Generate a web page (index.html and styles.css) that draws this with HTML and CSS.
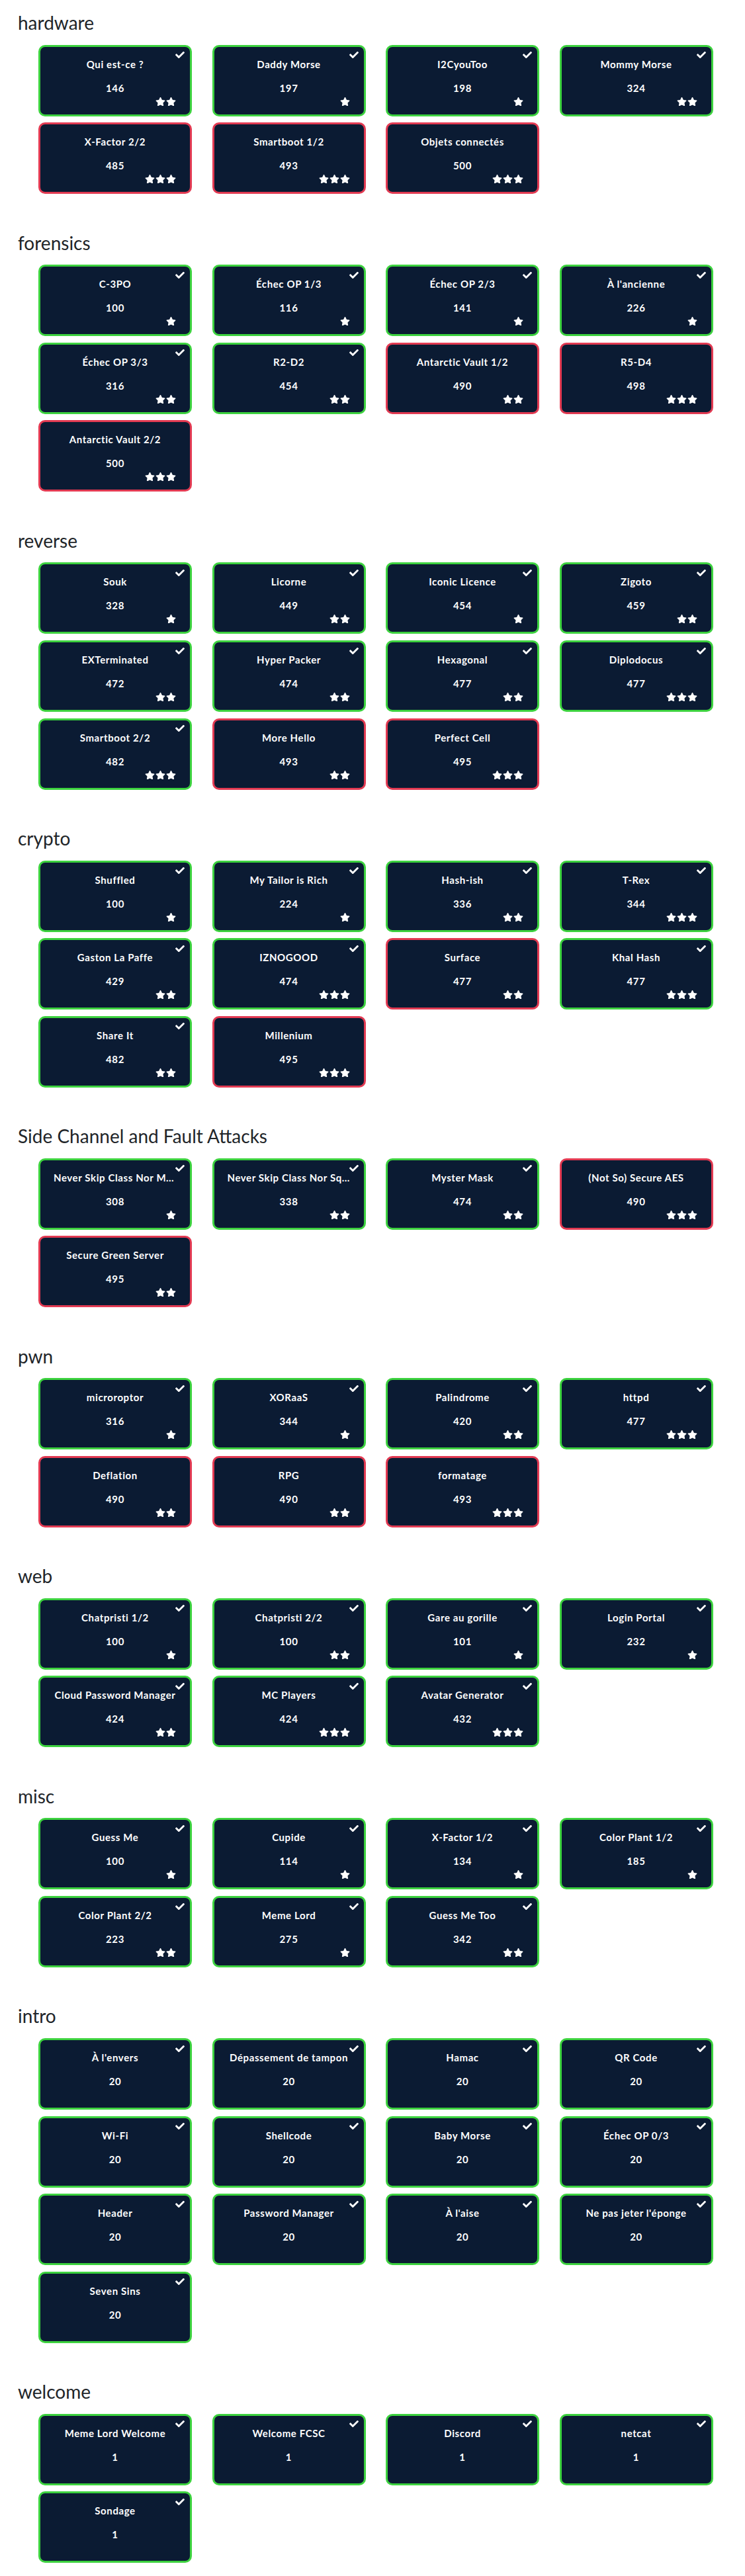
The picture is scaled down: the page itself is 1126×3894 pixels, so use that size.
FILE: index.html
```html
<!DOCTYPE html>
<html lang="fr">
<head>
<meta charset="utf-8">
<title>Challenges</title>
<link rel="stylesheet" href="styles.css">
</head>
<body>
<svg class="sprite" aria-hidden="true">
  <symbol id="star" viewBox="0 0 576 512"><path d="M259.3 17.8L194 150.2 47.9 171.5c-26.2 3.8-36.7 36.1-17.7 54.6l105.7 103-25 145.5c-4.5 26.3 23.2 46 46.4 33.7L288 439.6l130.7 68.7c23.2 12.2 50.9-7.4 46.4-33.7l-25-145.5 105.7-103c19-18.5 8.5-50.8-17.7-54.6L382 150.2 316.7 17.8c-11.7-23.6-45.6-23.9-57.4 0z"/></symbol>
  <symbol id="check" viewBox="0 72 512 376"><path d="M173.898 439.404l-166.4-166.4c-9.997-9.997-9.997-26.206 0-36.204l36.203-36.204c9.997-9.998 26.207-9.998 36.204 0L192 312.69 432.095 72.596c9.997-9.997 26.207-9.997 36.204 0l36.203 36.204c9.997 9.997 9.997 26.206 0 36.204l-294.4 294.401c-9.998 9.997-26.207 9.997-36.204-.001z"/></symbol>
</svg>
<main class="page">

<section class="cat">
<h3 class="cat-title">hardware</h3>
<div class="grid">
<div class="card solved"><svg class="check"><use href="#check"/></svg><div class="name">Qui est-ce ?</div><div class="pts">146</div><div class="stars"><svg class="star"><use href="#star"/></svg><svg class="star"><use href="#star"/></svg></div></div>
<div class="card solved"><svg class="check"><use href="#check"/></svg><div class="name">Daddy Morse</div><div class="pts">197</div><div class="stars"><svg class="star"><use href="#star"/></svg></div></div>
<div class="card solved"><svg class="check"><use href="#check"/></svg><div class="name">I2CyouToo</div><div class="pts">198</div><div class="stars"><svg class="star"><use href="#star"/></svg></div></div>
<div class="card solved"><svg class="check"><use href="#check"/></svg><div class="name">Mommy Morse</div><div class="pts">324</div><div class="stars"><svg class="star"><use href="#star"/></svg><svg class="star"><use href="#star"/></svg></div></div>
<div class="card unsolved"><div class="name">X-Factor 2/2</div><div class="pts">485</div><div class="stars"><svg class="star"><use href="#star"/></svg><svg class="star"><use href="#star"/></svg><svg class="star"><use href="#star"/></svg></div></div>
<div class="card unsolved"><div class="name">Smartboot 1/2</div><div class="pts">493</div><div class="stars"><svg class="star"><use href="#star"/></svg><svg class="star"><use href="#star"/></svg><svg class="star"><use href="#star"/></svg></div></div>
<div class="card unsolved"><div class="name">Objets connectés</div><div class="pts">500</div><div class="stars"><svg class="star"><use href="#star"/></svg><svg class="star"><use href="#star"/></svg><svg class="star"><use href="#star"/></svg></div></div>
</div>
</section>

<section class="cat">
<h3 class="cat-title">forensics</h3>
<div class="grid">
<div class="card solved"><svg class="check"><use href="#check"/></svg><div class="name">C-3PO</div><div class="pts">100</div><div class="stars"><svg class="star"><use href="#star"/></svg></div></div>
<div class="card solved"><svg class="check"><use href="#check"/></svg><div class="name">Échec OP 1/3</div><div class="pts">116</div><div class="stars"><svg class="star"><use href="#star"/></svg></div></div>
<div class="card solved"><svg class="check"><use href="#check"/></svg><div class="name">Échec OP 2/3</div><div class="pts">141</div><div class="stars"><svg class="star"><use href="#star"/></svg></div></div>
<div class="card solved"><svg class="check"><use href="#check"/></svg><div class="name">À l'ancienne</div><div class="pts">226</div><div class="stars"><svg class="star"><use href="#star"/></svg></div></div>
<div class="card solved"><svg class="check"><use href="#check"/></svg><div class="name">Échec OP 3/3</div><div class="pts">316</div><div class="stars"><svg class="star"><use href="#star"/></svg><svg class="star"><use href="#star"/></svg></div></div>
<div class="card solved"><svg class="check"><use href="#check"/></svg><div class="name">R2-D2</div><div class="pts">454</div><div class="stars"><svg class="star"><use href="#star"/></svg><svg class="star"><use href="#star"/></svg></div></div>
<div class="card unsolved"><div class="name">Antarctic Vault 1/2</div><div class="pts">490</div><div class="stars"><svg class="star"><use href="#star"/></svg><svg class="star"><use href="#star"/></svg></div></div>
<div class="card unsolved"><div class="name">R5-D4</div><div class="pts">498</div><div class="stars"><svg class="star"><use href="#star"/></svg><svg class="star"><use href="#star"/></svg><svg class="star"><use href="#star"/></svg></div></div>
<div class="card unsolved"><div class="name">Antarctic Vault 2/2</div><div class="pts">500</div><div class="stars"><svg class="star"><use href="#star"/></svg><svg class="star"><use href="#star"/></svg><svg class="star"><use href="#star"/></svg></div></div>
</div>
</section>

<section class="cat">
<h3 class="cat-title">reverse</h3>
<div class="grid">
<div class="card solved"><svg class="check"><use href="#check"/></svg><div class="name">Souk</div><div class="pts">328</div><div class="stars"><svg class="star"><use href="#star"/></svg></div></div>
<div class="card solved"><svg class="check"><use href="#check"/></svg><div class="name">Licorne</div><div class="pts">449</div><div class="stars"><svg class="star"><use href="#star"/></svg><svg class="star"><use href="#star"/></svg></div></div>
<div class="card solved"><svg class="check"><use href="#check"/></svg><div class="name">Iconic Licence</div><div class="pts">454</div><div class="stars"><svg class="star"><use href="#star"/></svg></div></div>
<div class="card solved"><svg class="check"><use href="#check"/></svg><div class="name">Zigoto</div><div class="pts">459</div><div class="stars"><svg class="star"><use href="#star"/></svg><svg class="star"><use href="#star"/></svg></div></div>
<div class="card solved"><svg class="check"><use href="#check"/></svg><div class="name">EXTerminated</div><div class="pts">472</div><div class="stars"><svg class="star"><use href="#star"/></svg><svg class="star"><use href="#star"/></svg></div></div>
<div class="card solved"><svg class="check"><use href="#check"/></svg><div class="name">Hyper Packer</div><div class="pts">474</div><div class="stars"><svg class="star"><use href="#star"/></svg><svg class="star"><use href="#star"/></svg></div></div>
<div class="card solved"><svg class="check"><use href="#check"/></svg><div class="name">Hexagonal</div><div class="pts">477</div><div class="stars"><svg class="star"><use href="#star"/></svg><svg class="star"><use href="#star"/></svg></div></div>
<div class="card solved"><svg class="check"><use href="#check"/></svg><div class="name">Diplodocus</div><div class="pts">477</div><div class="stars"><svg class="star"><use href="#star"/></svg><svg class="star"><use href="#star"/></svg><svg class="star"><use href="#star"/></svg></div></div>
<div class="card solved"><svg class="check"><use href="#check"/></svg><div class="name">Smartboot 2/2</div><div class="pts">482</div><div class="stars"><svg class="star"><use href="#star"/></svg><svg class="star"><use href="#star"/></svg><svg class="star"><use href="#star"/></svg></div></div>
<div class="card unsolved"><div class="name">More Hello</div><div class="pts">493</div><div class="stars"><svg class="star"><use href="#star"/></svg><svg class="star"><use href="#star"/></svg></div></div>
<div class="card unsolved"><div class="name">Perfect Cell</div><div class="pts">495</div><div class="stars"><svg class="star"><use href="#star"/></svg><svg class="star"><use href="#star"/></svg><svg class="star"><use href="#star"/></svg></div></div>
</div>
</section>

<section class="cat">
<h3 class="cat-title">crypto</h3>
<div class="grid">
<div class="card solved"><svg class="check"><use href="#check"/></svg><div class="name">Shuffled</div><div class="pts">100</div><div class="stars"><svg class="star"><use href="#star"/></svg></div></div>
<div class="card solved"><svg class="check"><use href="#check"/></svg><div class="name">My Tailor is Rich</div><div class="pts">224</div><div class="stars"><svg class="star"><use href="#star"/></svg></div></div>
<div class="card solved"><svg class="check"><use href="#check"/></svg><div class="name">Hash-ish</div><div class="pts">336</div><div class="stars"><svg class="star"><use href="#star"/></svg><svg class="star"><use href="#star"/></svg></div></div>
<div class="card solved"><svg class="check"><use href="#check"/></svg><div class="name">T-Rex</div><div class="pts">344</div><div class="stars"><svg class="star"><use href="#star"/></svg><svg class="star"><use href="#star"/></svg><svg class="star"><use href="#star"/></svg></div></div>
<div class="card solved"><svg class="check"><use href="#check"/></svg><div class="name">Gaston La Paffe</div><div class="pts">429</div><div class="stars"><svg class="star"><use href="#star"/></svg><svg class="star"><use href="#star"/></svg></div></div>
<div class="card solved"><svg class="check"><use href="#check"/></svg><div class="name">IZNOGOOD</div><div class="pts">474</div><div class="stars"><svg class="star"><use href="#star"/></svg><svg class="star"><use href="#star"/></svg><svg class="star"><use href="#star"/></svg></div></div>
<div class="card unsolved"><div class="name">Surface</div><div class="pts">477</div><div class="stars"><svg class="star"><use href="#star"/></svg><svg class="star"><use href="#star"/></svg></div></div>
<div class="card solved"><svg class="check"><use href="#check"/></svg><div class="name">Khal Hash</div><div class="pts">477</div><div class="stars"><svg class="star"><use href="#star"/></svg><svg class="star"><use href="#star"/></svg><svg class="star"><use href="#star"/></svg></div></div>
<div class="card solved"><svg class="check"><use href="#check"/></svg><div class="name">Share It</div><div class="pts">482</div><div class="stars"><svg class="star"><use href="#star"/></svg><svg class="star"><use href="#star"/></svg></div></div>
<div class="card unsolved"><div class="name">Millenium</div><div class="pts">495</div><div class="stars"><svg class="star"><use href="#star"/></svg><svg class="star"><use href="#star"/></svg><svg class="star"><use href="#star"/></svg></div></div>
</div>
</section>

<section class="cat">
<h3 class="cat-title">Side Channel and Fault Attacks</h3>
<div class="grid">
<div class="card solved"><svg class="check"><use href="#check"/></svg><div class="name">Never Skip Class Nor Math</div><div class="pts">308</div><div class="stars"><svg class="star"><use href="#star"/></svg></div></div>
<div class="card solved"><svg class="check"><use href="#check"/></svg><div class="name">Never Skip Class Nor Squares</div><div class="pts">338</div><div class="stars"><svg class="star"><use href="#star"/></svg><svg class="star"><use href="#star"/></svg></div></div>
<div class="card solved"><svg class="check"><use href="#check"/></svg><div class="name">Myster Mask</div><div class="pts">474</div><div class="stars"><svg class="star"><use href="#star"/></svg><svg class="star"><use href="#star"/></svg></div></div>
<div class="card unsolved"><div class="name">(Not So) Secure AES</div><div class="pts">490</div><div class="stars"><svg class="star"><use href="#star"/></svg><svg class="star"><use href="#star"/></svg><svg class="star"><use href="#star"/></svg></div></div>
<div class="card unsolved"><div class="name">Secure Green Server</div><div class="pts">495</div><div class="stars"><svg class="star"><use href="#star"/></svg><svg class="star"><use href="#star"/></svg></div></div>
</div>
</section>

<section class="cat">
<h3 class="cat-title">pwn</h3>
<div class="grid">
<div class="card solved"><svg class="check"><use href="#check"/></svg><div class="name">microroptor</div><div class="pts">316</div><div class="stars"><svg class="star"><use href="#star"/></svg></div></div>
<div class="card solved"><svg class="check"><use href="#check"/></svg><div class="name">XORaaS</div><div class="pts">344</div><div class="stars"><svg class="star"><use href="#star"/></svg></div></div>
<div class="card solved"><svg class="check"><use href="#check"/></svg><div class="name">Palindrome</div><div class="pts">420</div><div class="stars"><svg class="star"><use href="#star"/></svg><svg class="star"><use href="#star"/></svg></div></div>
<div class="card solved"><svg class="check"><use href="#check"/></svg><div class="name">httpd</div><div class="pts">477</div><div class="stars"><svg class="star"><use href="#star"/></svg><svg class="star"><use href="#star"/></svg><svg class="star"><use href="#star"/></svg></div></div>
<div class="card unsolved"><div class="name">Deflation</div><div class="pts">490</div><div class="stars"><svg class="star"><use href="#star"/></svg><svg class="star"><use href="#star"/></svg></div></div>
<div class="card unsolved"><div class="name">RPG</div><div class="pts">490</div><div class="stars"><svg class="star"><use href="#star"/></svg><svg class="star"><use href="#star"/></svg></div></div>
<div class="card unsolved"><div class="name">formatage</div><div class="pts">493</div><div class="stars"><svg class="star"><use href="#star"/></svg><svg class="star"><use href="#star"/></svg><svg class="star"><use href="#star"/></svg></div></div>
</div>
</section>

<section class="cat">
<h3 class="cat-title">web</h3>
<div class="grid">
<div class="card solved"><svg class="check"><use href="#check"/></svg><div class="name">Chatpristi 1/2</div><div class="pts">100</div><div class="stars"><svg class="star"><use href="#star"/></svg></div></div>
<div class="card solved"><svg class="check"><use href="#check"/></svg><div class="name">Chatpristi 2/2</div><div class="pts">100</div><div class="stars"><svg class="star"><use href="#star"/></svg><svg class="star"><use href="#star"/></svg></div></div>
<div class="card solved"><svg class="check"><use href="#check"/></svg><div class="name">Gare au gorille</div><div class="pts">101</div><div class="stars"><svg class="star"><use href="#star"/></svg></div></div>
<div class="card solved"><svg class="check"><use href="#check"/></svg><div class="name">Login Portal</div><div class="pts">232</div><div class="stars"><svg class="star"><use href="#star"/></svg></div></div>
<div class="card solved"><svg class="check"><use href="#check"/></svg><div class="name">Cloud Password Manager</div><div class="pts">424</div><div class="stars"><svg class="star"><use href="#star"/></svg><svg class="star"><use href="#star"/></svg></div></div>
<div class="card solved"><svg class="check"><use href="#check"/></svg><div class="name">MC Players</div><div class="pts">424</div><div class="stars"><svg class="star"><use href="#star"/></svg><svg class="star"><use href="#star"/></svg><svg class="star"><use href="#star"/></svg></div></div>
<div class="card solved"><svg class="check"><use href="#check"/></svg><div class="name">Avatar Generator</div><div class="pts">432</div><div class="stars"><svg class="star"><use href="#star"/></svg><svg class="star"><use href="#star"/></svg><svg class="star"><use href="#star"/></svg></div></div>
</div>
</section>

<section class="cat">
<h3 class="cat-title">misc</h3>
<div class="grid">
<div class="card solved"><svg class="check"><use href="#check"/></svg><div class="name">Guess Me</div><div class="pts">100</div><div class="stars"><svg class="star"><use href="#star"/></svg></div></div>
<div class="card solved"><svg class="check"><use href="#check"/></svg><div class="name">Cupide</div><div class="pts">114</div><div class="stars"><svg class="star"><use href="#star"/></svg></div></div>
<div class="card solved"><svg class="check"><use href="#check"/></svg><div class="name">X-Factor 1/2</div><div class="pts">134</div><div class="stars"><svg class="star"><use href="#star"/></svg></div></div>
<div class="card solved"><svg class="check"><use href="#check"/></svg><div class="name">Color Plant 1/2</div><div class="pts">185</div><div class="stars"><svg class="star"><use href="#star"/></svg></div></div>
<div class="card solved"><svg class="check"><use href="#check"/></svg><div class="name">Color Plant 2/2</div><div class="pts">223</div><div class="stars"><svg class="star"><use href="#star"/></svg><svg class="star"><use href="#star"/></svg></div></div>
<div class="card solved"><svg class="check"><use href="#check"/></svg><div class="name">Meme Lord</div><div class="pts">275</div><div class="stars"><svg class="star"><use href="#star"/></svg></div></div>
<div class="card solved"><svg class="check"><use href="#check"/></svg><div class="name">Guess Me Too</div><div class="pts">342</div><div class="stars"><svg class="star"><use href="#star"/></svg><svg class="star"><use href="#star"/></svg></div></div>
</div>
</section>

<section class="cat">
<h3 class="cat-title">intro</h3>
<div class="grid">
<div class="card solved"><svg class="check"><use href="#check"/></svg><div class="name">À l'envers</div><div class="pts">20</div><div class="stars"></div></div>
<div class="card solved"><svg class="check"><use href="#check"/></svg><div class="name">Dépassement de tampon</div><div class="pts">20</div><div class="stars"></div></div>
<div class="card solved"><svg class="check"><use href="#check"/></svg><div class="name">Hamac</div><div class="pts">20</div><div class="stars"></div></div>
<div class="card solved"><svg class="check"><use href="#check"/></svg><div class="name">QR Code</div><div class="pts">20</div><div class="stars"></div></div>
<div class="card solved"><svg class="check"><use href="#check"/></svg><div class="name">Wi-Fi</div><div class="pts">20</div><div class="stars"></div></div>
<div class="card solved"><svg class="check"><use href="#check"/></svg><div class="name">Shellcode</div><div class="pts">20</div><div class="stars"></div></div>
<div class="card solved"><svg class="check"><use href="#check"/></svg><div class="name">Baby Morse</div><div class="pts">20</div><div class="stars"></div></div>
<div class="card solved"><svg class="check"><use href="#check"/></svg><div class="name">Échec OP 0/3</div><div class="pts">20</div><div class="stars"></div></div>
<div class="card solved"><svg class="check"><use href="#check"/></svg><div class="name">Header</div><div class="pts">20</div><div class="stars"></div></div>
<div class="card solved"><svg class="check"><use href="#check"/></svg><div class="name">Password Manager</div><div class="pts">20</div><div class="stars"></div></div>
<div class="card solved"><svg class="check"><use href="#check"/></svg><div class="name">À l'aise</div><div class="pts">20</div><div class="stars"></div></div>
<div class="card solved"><svg class="check"><use href="#check"/></svg><div class="name">Ne pas jeter l'éponge</div><div class="pts">20</div><div class="stars"></div></div>
<div class="card solved"><svg class="check"><use href="#check"/></svg><div class="name">Seven Sins</div><div class="pts">20</div><div class="stars"></div></div>
</div>
</section>

<section class="cat">
<h3 class="cat-title">welcome</h3>
<div class="grid">
<div class="card solved"><svg class="check"><use href="#check"/></svg><div class="name">Meme Lord Welcome</div><div class="pts">1</div><div class="stars"></div></div>
<div class="card solved"><svg class="check"><use href="#check"/></svg><div class="name">Welcome FCSC</div><div class="pts">1</div><div class="stars"></div></div>
<div class="card solved"><svg class="check"><use href="#check"/></svg><div class="name">Discord</div><div class="pts">1</div><div class="stars"></div></div>
<div class="card solved"><svg class="check"><use href="#check"/></svg><div class="name">netcat</div><div class="pts">1</div><div class="stars"></div></div>
<div class="card solved"><svg class="check"><use href="#check"/></svg><div class="name">Sondage</div><div class="pts">1</div><div class="stars"></div></div>
</div>
</section>

</main>
</body>
</html>
```
FILE: styles.css
```css
html, body {
  margin: 0;
  padding: 0;
  background: #ffffff;
}

body {
  font-family: Lato, "Noto Sans", "DejaVu Sans", sans-serif;
  color: #212529;
}

.sprite {
  position: absolute;
  width: 0;
  height: 0;
  overflow: hidden;
}

.page {
  padding: 18px 0 19px;
}

.cat + .cat {
  margin-top: 57.4px;
}

.cat-title {
  margin: 0 0 16px;
  padding-left: 27px;
  font-size: 28px;
  font-weight: 400;
  line-height: 1.2;
  color: #212529;
}

.grid {
  display: grid;
  grid-template-columns: repeat(4, 232px);
  column-gap: 30.5px;
  row-gap: 9.6px;
  padding-left: 58px;
}

.card {
  position: relative;
  box-sizing: border-box;
  height: 108px;
  padding: 16px 20px 0;
  border: 3px solid;
  border-radius: 10px;
  background: #0b1b33;
  color: #ffffff;
  text-align: center;
}

.solved {
  border-color: #3dd23f;
}

.unsolved {
  border-color: #e23a52;
}

.name {
  font-size: 15px;
  font-weight: 700;
  line-height: 20px;
  letter-spacing: 0.6px;
  white-space: nowrap;
  overflow: hidden;
  text-overflow: ellipsis;
}

.pts {
  margin-top: 16px;
  font-size: 15px;
  font-weight: 700;
  line-height: 20px;
  letter-spacing: 0.6px;
}

.stars {
  display: flex;
  justify-content: flex-end;
  gap: 1px;
  height: 14px;
  margin-top: 4px;
  padding-right: 1px;
}

.star {
  width: 15px;
  height: 13.3px;
  fill: #ffffff;
}

.check {
  position: absolute;
  top: 7.6px;
  right: 8px;
  width: 14px;
  height: 10.3px;
  fill: #ffffff;
}
```
